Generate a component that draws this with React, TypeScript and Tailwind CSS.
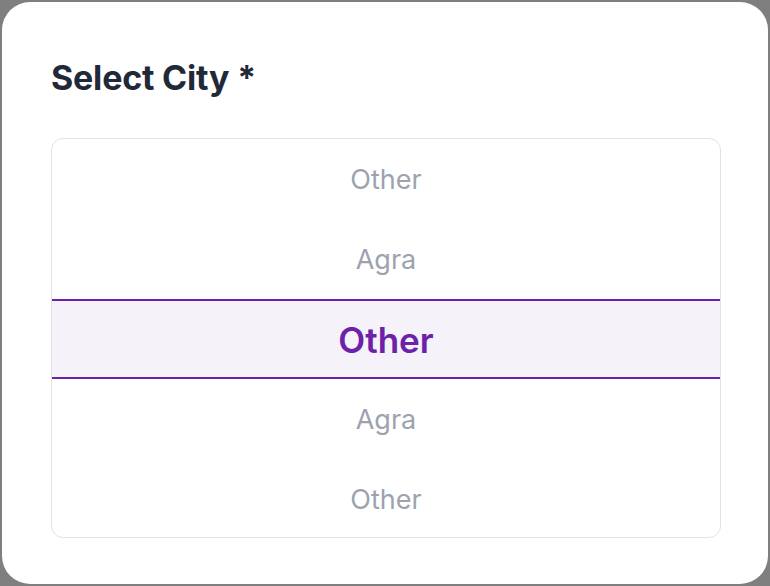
import React from "react";

const items = ["Other", "Agra", "Other", "Agra", "Other"];

export default function App() {
  const selected = 2;
  return (
    <div
      className="w-[770px] h-[586px] bg-[#7f7f7f] p-[2px]"
      style={{ fontFamily: "Inter, 'Noto Sans', sans-serif" }}
    >
      <div className="h-full w-full rounded-[28px] bg-white pl-[49px] pr-[47px] pt-[56px]">
        <h2 className="text-[34px] leading-[40px] font-bold text-[#1f2937] tracking-[-0.2px]">
          Select City *
        </h2>
        <div className="mt-[40px] h-[400px] rounded-[12px] border border-[#e2e2e6] overflow-hidden">
          {items.map((city, i) =>
            i === selected ? (
              <div
                key={i}
                className="h-[80px] flex items-center justify-center pt-[2px] bg-[#f5f2fa] border-y-2 border-[#6b21a8] text-[35px] font-semibold text-[#6b21a8]"
              >
                {city}
              </div>
            ) : (
              <div
                key={i}
                className="h-[80px] flex items-center justify-center pt-[3px] text-[27px] text-[#9ca3af]"
              >
                {city}
              </div>
            )
          )}
        </div>
      </div>
    </div>
  );
}
